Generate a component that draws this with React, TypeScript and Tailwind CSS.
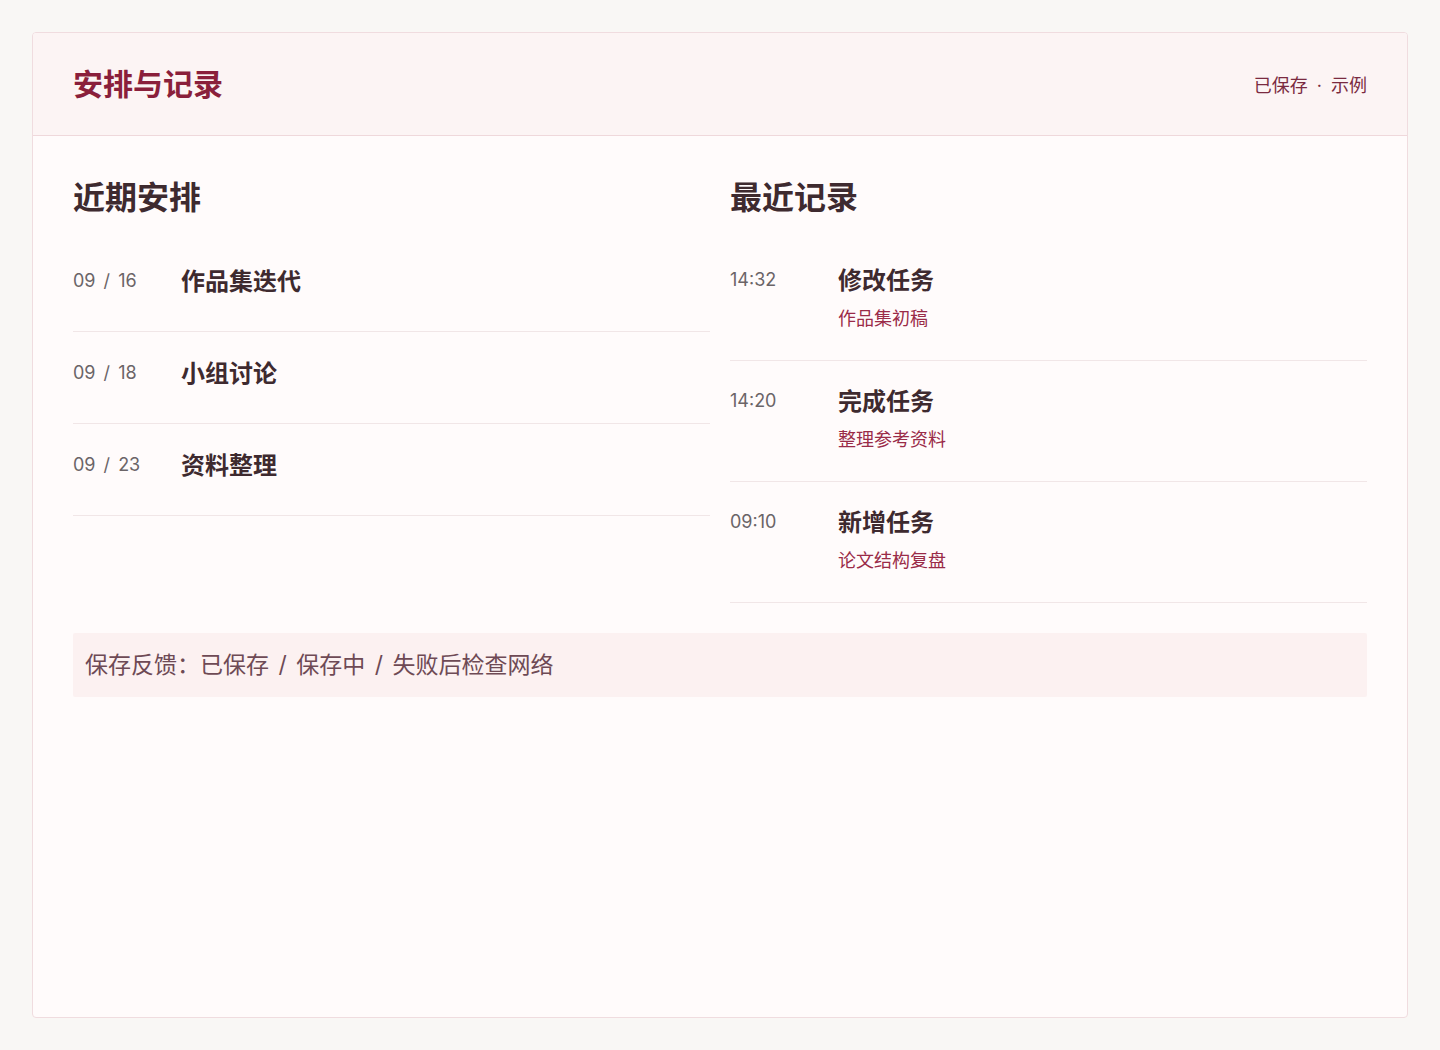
const plans = [
  { date: '09 / 16', title: '作品集迭代' },
  { date: '09 / 18', title: '小组讨论' },
  { date: '09 / 23', title: '资料整理' },
];

const logs = [
  { time: '14:32', title: '修改任务', note: '作品集初稿' },
  { time: '14:20', title: '完成任务', note: '整理参考资料' },
  { time: '09:10', title: '新增任务', note: '论文结构复盘' },
];

export default function App() {
  return (
    <div
      className="min-h-screen bg-[#f9f7f5] p-8"
      style={{ fontFamily: 'Inter, "Noto Sans CJK SC", "Noto Sans", sans-serif' }}
    >
      <div className="flex h-[986px] flex-col overflow-hidden rounded-[4px] border border-[#f0dcdf] bg-[#fffbfb]">
        <header className="flex h-[103px] shrink-0 items-center justify-between border-b border-[#efd8db] bg-[#fcf4f4] px-10">
          <h1 className="text-[30px] font-bold leading-[40px] text-[#8a1f3b]">安排与记录</h1>
          <span className="pt-[3px] text-[18px] text-[#7a2a40] [word-spacing:4px]">已保存 · 示例</span>
        </header>

        <main className="px-10 pt-10">
          <div className="grid grid-cols-2 gap-5">
            <section>
              <h2 className="mb-5 text-[32px] font-bold leading-[44px] text-[#3e2a2f]">近期安排</h2>
              <ul>
                {plans.map(p => (
                  <li key={p.date} className="flex border-b border-[#f1e6e7] pt-[25px] pb-[32px]">
                    <span className="w-[108px] shrink-0 text-[18px] leading-[32px] text-[#6b6467] [word-spacing:3px]">{p.date}</span>
                    <span className="text-[24px] font-semibold leading-[34px] text-[#3e2a2f]">{p.title}</span>
                  </li>
                ))}
              </ul>
            </section>

            <section>
              <h2 className="mb-5 text-[32px] font-bold leading-[44px] text-[#3e2a2f]">最近记录</h2>
              <ul>
                {logs.map(l => (
                  <li key={l.time} className="flex border-b border-[#f1e6e7] pt-6 pb-[28px]">
                    <span className="w-[108px] shrink-0 text-[18px] leading-[32px] text-[#6b6467]">{l.time}</span>
                    <div>
                      <div className="text-[24px] font-semibold leading-[34px] text-[#3e2a2f]">{l.title}</div>
                      <div className="mt-2 text-[18px] leading-[26px] text-[#9a2b48]">{l.note}</div>
                    </div>
                  </li>
                ))}
              </ul>
            </section>
          </div>

          <div className="mt-[30px] flex h-16 items-center rounded-[2px] bg-[#fcf1f1] px-3 text-[23px] text-[#6e4a55] [word-spacing:3px]">
            保存反馈：已保存 / 保存中 / 失败后检查网络
          </div>
        </main>
      </div>
    </div>
  );
}
